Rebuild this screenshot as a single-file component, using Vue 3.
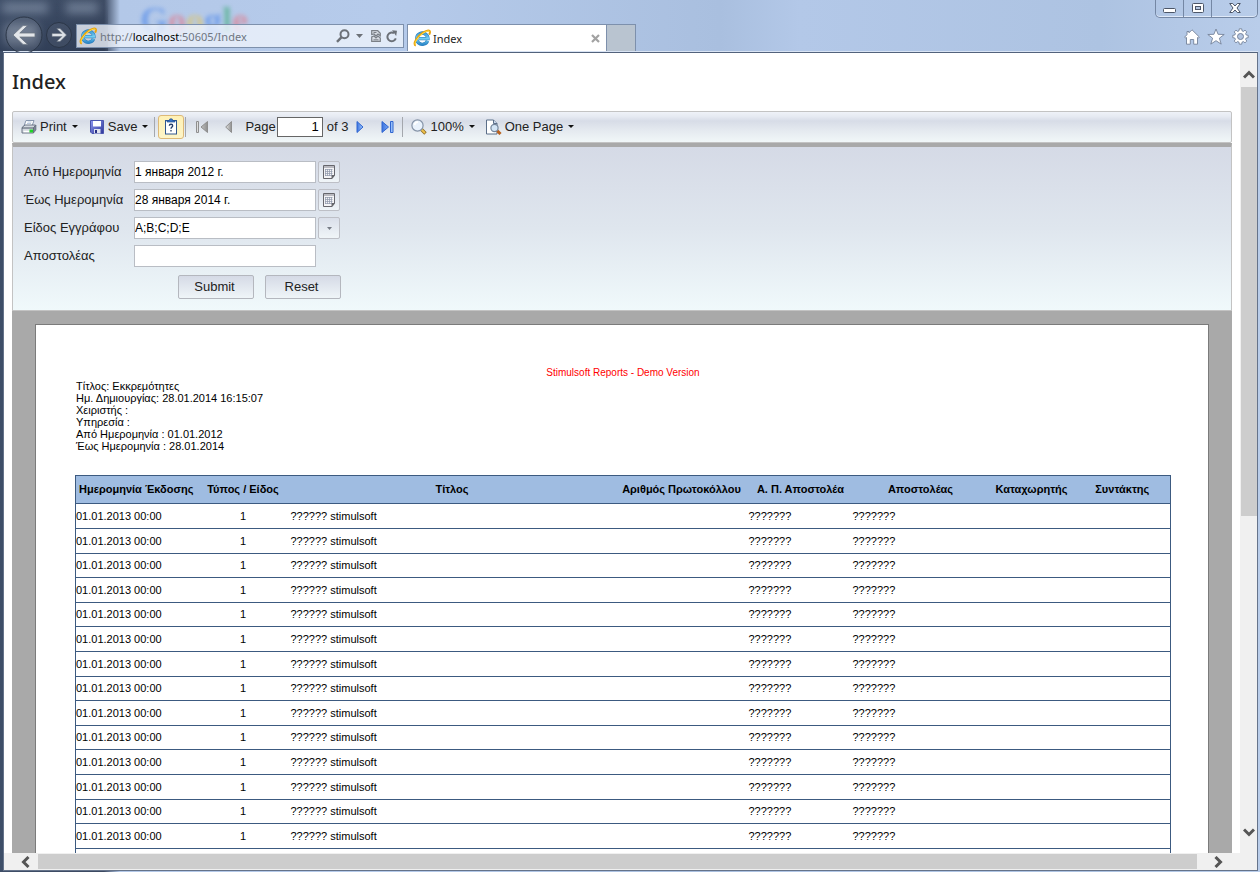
<script setup>
import { ref } from 'vue'

const from = ref('1 января 2012 г.')
const to = ref('28 января 2014 г.')
const kinds = ref('A;B;C;D;E')
const sender = ref('')
const page = ref('1')
const address = ref('http://localhost:50605/Index')

const info = [
  'Τίτλος: Εκκρεμότητες',
  'Ημ. Δημιουργίας: 28.01.2014 16:15:07',
  'Χειριστής :',
  'Υπηρεσία :',
  'Από Ημερομηνία : 01.01.2012',
  'Έως Ημερομηνία : 28.01.2014'
]
const columns = [
  'Ημερομηνία Έκδοσης',
  'Τύπος / Είδος',
  'Τίτλος',
  'Αριθμός Πρωτοκόλλου',
  'Α. Π. Αποστολέα',
  'Αποστολέας',
  'Καταχωρητής',
  'Συντάκτης'
]
const rows = Array.from({ length: 15 }, () => [
  '01.01.2013 00:00', '1', '?????? stimulsoft', '', '???????', '???????', '', ''
])
</script>

<template>
  <div class="window">
    <div class="glass" aria-hidden="true">
      <i class="smudge s1"></i><i class="smudge s2"></i><i class="smudge s3"></i>
      <span class="ghost"><b class="blue">G</b><b class="red">o</b><b class="gold">o</b><b class="blue">g</b><b class="green">l</b><b class="red">e</b></span>
    </div>

    <svg class="defs" width="0" height="0" aria-hidden="true">
      <defs>
        <linearGradient id="ieBlue" x1="0" y1="0" x2="0" y2="1">
          <stop offset="0" stop-color="#3f9bd6" /><stop offset=".5" stop-color="#74d0f3" /><stop offset="1" stop-color="#2f8bcb" />
        </linearGradient>
        <linearGradient id="arrowBlue" x1="0" y1="0" x2="1" y2="0">
          <stop offset="0" stop-color="#3a72e0" /><stop offset="1" stop-color="#a4cafc" />
        </linearGradient>
        <linearGradient id="arrowGrey" x1="0" y1="0" x2="1" y2="0">
          <stop offset="0" stop-color="#e6e6e6" /><stop offset="1" stop-color="#8e8e8e" />
        </linearGradient>
        <linearGradient id="floppy" x1="0" y1="0" x2="1" y2="1">
          <stop offset="0" stop-color="#8f98f2" /><stop offset="1" stop-color="#2c3698" />
        </linearGradient>
        <symbol id="ie" viewBox="0 0 18 18">
          <path d="M14.500 11.800A5.600 5.600 0 1 1 14.900 9.600H6" fill="none" stroke="#2a7dbc" stroke-width="3.400" />
          <path d="M14.500 11.800A5.600 5.600 0 1 1 14.900 9.600H6" fill="none" stroke="url(#ieBlue)" stroke-width="2.400" />
          <path d="M2.800 16.600C-.8 15 4.200 7.400 10 3.600 14 1 17.400.3 16.900 3.600c-.1.8-.4 1.500-.8 2" fill="none" stroke="#e9a30d" stroke-width="2" />
          <path d="M2.400 15.800C1 13.600 5 7.900 10 4.300c3-2.100 6-3 6.500-1.600" fill="none" stroke="#ffe04a" stroke-width="1" />
        </symbol>
      </defs>
    </svg>

    <header class="chrome">
      <nav class="history">
        <button class="back" aria-label="Back">
          <svg width="38" height="38" viewBox="0 0 38 38"><circle cx="19" cy="19" r="18" fill="#ffffff12" stroke="#2b3647" stroke-width="1" /><path d="M8 19 18 9.600h4.600L14.800 17H30v4H14.800l7.800 7.400H18z" fill="#e3e6ea" stroke="#6a7482" stroke-width=".8" /></svg>
        </button>
        <button class="forward" aria-label="Forward">
          <svg width="28" height="28" viewBox="0 0 28 28"><circle cx="14" cy="14" r="12.500" fill="#ffffff10" stroke="#2b3647" stroke-width="1" /><path d="M21.500 14 15 7.500h-3.200l5 5H7v3h9.800l-5 5H15z" fill="#dde1e7" stroke="#6a7482" stroke-width=".6" /></svg>
        </button>
      </nav>
      <div class="address">
        <svg width="18" height="18"><use href="#ie" /></svg>
        <div class="url" role="textbox" aria-label="Address" :title="address">http://<b>localhost</b>:50605/Index</div>
        <button aria-label="Search"><svg width="14" height="14" viewBox="0 0 14 14"><circle cx="8.500" cy="5.300" r="4" fill="none" stroke="#6c7178" stroke-width="2" /><path d="M5.600 8.200 1 12.800" stroke="#6c7178" stroke-width="2.400" /></svg></button>
        <button class="mini" aria-label="Search options"><svg width="7" height="4" viewBox="0 0 7 4"><path d="M0 0h7L3.500 4z" fill="#6c7178" /></svg></button>
        <button class="compat" aria-label="Compatibility view"><svg width="10" height="12" viewBox="0 0 10 12"><path d="M.7 4.500V.7h6l2.600 2.500v2.500L7 4 5 6 3 4zM.7 11.300V7L3 6l2 2 2-2 2.300 2v3.300z" fill="#d9dee6" stroke="#7b8087" stroke-width="1.200" /><path d="M2.500 2.500h3M2.500 9.800h5" stroke="#7b8087" /></svg></button>
        <button class="reload" aria-label="Refresh"><svg width="12" height="13" viewBox="0 0 12 13"><path d="M9.800 8.300A4.300 4.300 0 1 1 8 3.200" fill="none" stroke="#6c7178" stroke-width="2" /><path d="M6 .2 11 .8 10.200 6z" fill="#6c7178" /></svg></button>
      </div>
      <div class="tab">
        <svg width="18" height="18"><use href="#ie" /></svg>
        <span>Index</span>
        <button aria-label="Close tab"><svg width="9" height="9" viewBox="0 0 9 9"><path d="m1 1 7 7M8 1 1 8" stroke="#a2a2a2" stroke-width="2.200" /></svg></button>
      </div>
      <button class="newtab" aria-label="New tab"></button>
      <div class="right">
        <div class="controls">
          <button aria-label="Minimize"><svg width="13" height="6" viewBox="0 0 13 6"><rect x=".5" y=".5" width="12" height="4" rx="1" fill="#fff" stroke="#4c5668" /></svg></button>
          <button aria-label="Maximize"><svg width="12" height="10" viewBox="0 0 12 10"><rect x=".5" y=".5" width="11" height="9" rx="1" fill="#fff" stroke="#4c5668" /><rect x="3.500" y="3.500" width="5" height="3" fill="#b5c6e0" stroke="#4c5668" /></svg></button>
          <button class="close" aria-label="Close"><svg width="12" height="10" viewBox="0 0 12 10"><path d="M.7.5h3L6 3 8.300.5h3L8 5l3.300 4.500h-3L6 7 3.700 9.500h-3L4 5z" fill="#fff" stroke="#4c5668" /></svg></button>
        </div>
        <div class="tools">
          <button aria-label="Home"><svg width="16" height="16" viewBox="0 0 16 16"><path d="M8 .8 15.300 8l-1 1.200-.8-.7v6.700H9.700v-4.700H6.300v4.700H2.500V8.500l-.8.7-1-1.200L3 5.700V2.500h2v1.300z" fill="#fff" stroke="#74829a" stroke-width=".9" /></svg></button>
          <button aria-label="Favorites"><svg width="18" height="17" viewBox="0 0 18 17"><path d="m9 1 2.100 5.300 6.100.2-4.800 3.700 1.800 5.900L9 12.700l-5.200 3.400 1.800-5.900L.8 6.500l6.100-.2z" fill="#fff" stroke="#74829a" stroke-width=".9" /></svg></button>
          <button aria-label="Tools"><svg width="17" height="17" viewBox="0 0 17 17"><path d="M7.300.8h2.400l.3 2 1.400.6L13 2.200l1.800 1.700-1.200 1.700.6 1.400 2 .3v2.400l-2 .3-.6 1.400 1.200 1.700L13 14.800l-1.600-1.200-1.400.6-.3 2H7.300l-.3-2-1.400-.6L4 14.800l-1.800-1.700 1.200-1.700-.6-1.400-2-.3V7.300l2-.3.600-1.400-1.200-1.700L4 2.200l1.600 1.200L7 2.800z" fill="#fff" stroke="#74829a" stroke-width=".9" /><circle cx="8.500" cy="8.500" r="3" fill="#b3c5e1" stroke="#74829a" /></svg></button>
        </div>
      </div>
    </header>

    <div class="client">
      <main class="doc">
        <h1>Index</h1>
        <div class="viewer">
          <div class="toolbar" role="toolbar" aria-label="Report">
            <button class="tool print">
              <svg width="16" height="16" viewBox="0 0 16 16"><path d="M5 1.500h8L11 7H3z" fill="#fff" stroke="#8796ae" /><path d="M6.500 3h4M6 4.500h4" stroke="#9db1d0" stroke-width=".7" /><path d="M1 8.500 4 6h10.500l-2 3v5H1z" fill="#d4d9e0" stroke="#6d7787" /><path d="m12.500 9 2.500-3v5l-2.500 3z" fill="#7d8797" stroke="#5f6978" stroke-width=".6" /><path d="M1 9h11.500" stroke="#4d5766" /><path d="M2.500 12.500h6" stroke="#fff" stroke-width="1.500" /><rect x="8.500" y="10.500" width="3.500" height="3" fill="#20d428" /></svg>
              Print<i class="caret"></i>
            </button>
            <button class="tool save">
              <svg width="14" height="14" viewBox="0 0 14 14"><path d="M.5.500h13v13H2L.5 12z" fill="url(#floppy)" stroke="#4a54ae" /><path d="M3 1h8v5.500H3z" fill="#fff" /><path d="M4 9h6.500v4.500H4z" fill="#dfe2ee" /><path d="M5 10h2v3H5z" fill="#272f84" /></svg>
              Save<i class="caret"></i>
            </button>
            <i class="sep"></i>
            <button class="params" aria-label="Parameters">
              <svg width="14" height="17" viewBox="0 0 14 17"><rect x="1.500" y="2.500" width="11" height="13.500" fill="#fff" stroke="#31578e" /><path d="M3 4V2.500h2.200a1.800 1.800 0 0 1 3.600 0H11V4z" fill="#3975c6" stroke="#234e90" stroke-width=".7" /><path d="M5.300 7.700c.1-2 3.400-1.900 3.400 0C8.700 9 7 9 7 10.800M7 12v1.500" fill="none" stroke="#243d69" stroke-width="1.300" /></svg>
            </button>
            <i class="sep"></i>
            <button class="nav first" aria-label="First page"><svg width="13" height="12" viewBox="0 0 13 12"><path d="M.5.500h2v11h-2zM11.500.5v11L5 6z" fill="url(#arrowGrey)" stroke="#8e8e8e" /></svg></button>
            <button class="nav prev" aria-label="Previous page"><svg width="8" height="12" viewBox="0 0 8 12"><path d="M6.500.5v11L.7 6z" fill="url(#arrowGrey)" stroke="#8e8e8e" /></svg></button>
            <label for="page">Page</label>
            <input id="page" v-model="page">
            <span>of 3</span>
            <button class="nav next" aria-label="Next page"><svg width="8" height="12" viewBox="0 0 8 12"><path d="M1 .5v11L7 6z" fill="url(#arrowBlue)" stroke="#2f65d0" /></svg></button>
            <button class="nav last" aria-label="Last page"><svg width="13" height="12" viewBox="0 0 13 12"><path d="M1 .5v11L7.500 6zM9.500.5h2.500v11H9.500z" fill="url(#arrowBlue)" stroke="#2f65d0" /></svg></button>
            <i class="sep"></i>
            <button class="tool zoom">
              <svg width="16" height="16" viewBox="0 0 16 16"><path d="m10 10 4.500 4.500" stroke="#8d6b25" stroke-width="3.400" /><path d="m10.500 10.500 3.500 3.500" stroke="#efc24a" stroke-width="1.800" /><circle cx="6.500" cy="6.500" r="5.600" fill="#e9f2fc" stroke="#8694a8" stroke-width="1.200" /><path d="M3.500 6A3.500 3.500 0 0 1 7 3.200" fill="none" stroke="#fff" stroke-width="1.800" /></svg>
              100%<i class="caret"></i>
            </button>
            <button class="tool">
              <svg width="16" height="16" viewBox="0 0 16 16"><path d="M.5 1h7L11 4.500V15H.5z" fill="#fff" stroke="#5b6e88" /><path d="M7.500 1v3.500H11" fill="#c9d9ee" stroke="#5b6e88" /><path d="m10.500 11 4 4" stroke="#b9601c" stroke-width="3" /><circle cx="8.500" cy="9" r="3.600" fill="#d4e5f6" stroke="#75869c" stroke-width="1.200" /></svg>
              One Page<i class="caret"></i>
            </button>
          </div>

          <form class="filters" @submit.prevent>
            <div class="field">
              <label for="from">Από Ημερομηνία</label><input id="from" v-model="from">
              <button type="button" aria-label="Choose start date"><svg width="12" height="14" viewBox="0 0 12 14"><path d="M.500.500h11v10L9 13.500H.5z" fill="#f4f4f6" stroke="#66666c" /><path d="M1 2h10" stroke="#b9b9c0" stroke-width="2" /><path d="M2 4.500h7.500M2 6.500h7.500M2 8.500h7.500M2 10.500h7.500M2.500 4v7M4.500 4v7M6.500 4v7M8.500 4v7" stroke="#8e97ab" stroke-width=".7" /><path d="M9 13.500v-3h2.500" fill="#666" stroke="#66666c" /></svg></button>
            </div>
            <div class="field">
              <label for="to">Έως Ημερομηνία</label><input id="to" v-model="to">
              <button type="button" aria-label="Choose end date"><svg width="12" height="14" viewBox="0 0 12 14"><path d="M.500.500h11v10L9 13.500H.5z" fill="#f4f4f6" stroke="#66666c" /><path d="M1 2h10" stroke="#b9b9c0" stroke-width="2" /><path d="M2 4.500h7.500M2 6.500h7.500M2 8.500h7.500M2 10.500h7.500M2.500 4v7M4.500 4v7M6.500 4v7M8.500 4v7" stroke="#8e97ab" stroke-width=".7" /><path d="M9 13.500v-3h2.500" fill="#666" stroke="#66666c" /></svg></button>
            </div>
            <div class="field">
              <label for="kinds">Είδος Εγγράφου</label><input id="kinds" v-model="kinds">
              <button type="button" aria-label="Choose kinds"><svg width="5" height="3" viewBox="0 0 5 3"><path d="M0 0h5L2.500 3z" fill="#777c86" /></svg></button>
            </div>
            <div class="field">
              <label for="sender">Αποστολέας</label><input id="sender" v-model="sender">
            </div>
            <div class="actions"><button type="submit">Submit</button><button type="reset">Reset</button></div>
          </form>

          <div class="desk">
            <article class="sheet">
              <p class="demo">Stimulsoft Reports - Demo Version</p>
              <div class="info"><p v-for="line in info" :key="line">{{ line }}</p></div>
              <table>
                <colgroup><col class="c1"><col class="c2"><col><col class="c4"><col class="c5"><col class="c6"><col class="c7"><col class="c8"></colgroup>
                <thead><tr><th v-for="c in columns" :key="c" scope="col">{{ c }}</th></tr></thead>
                <tbody>
                  <tr v-for="(row, r) in rows" :key="r"><td v-for="(cell, i) in row" :key="i">{{ cell }}</td></tr>
                </tbody>
              </table>
            </article>
          </div>
        </div>
      </main>
      <div class="vbar">
        <button aria-label="Scroll up"><svg width="12" height="9" viewBox="0 0 12 9"><path d="m1 7.500 5-5 5 5" fill="none" stroke="#555" stroke-width="3" /></svg></button>
        <div class="track"><i class="thumb"></i></div>
        <button aria-label="Scroll down"><svg width="12" height="9" viewBox="0 0 12 9"><path d="m1 1.500 5 5 5-5" fill="none" stroke="#555" stroke-width="3" /></svg></button>
      </div>
      <div class="hbar">
        <button aria-label="Scroll left"><svg width="9" height="12" viewBox="0 0 9 12"><path d="m7.500 1-5 5 5 5" fill="none" stroke="#555" stroke-width="3" /></svg></button>
        <i class="thumb"></i>
        <button aria-label="Scroll right"><svg width="9" height="12" viewBox="0 0 9 12"><path d="m1.500 1 5 5-5 5" fill="none" stroke="#555" stroke-width="3" /></svg></button>
      </div>
    </div>
  </div>
</template>

<style>
html, body { background: #b5c9e8; overflow: hidden; }
</style>

<style scoped>
* { box-sizing: border-box; }
button { border: 0; padding: 0; margin: 0; background: none; font: inherit; color: inherit; display: flex; align-items: center; justify-content: center; }
svg { display: block; flex: none; }
p, h1 { margin: 0; }
input { font: inherit; border-radius: 0; outline: 0; min-width: 0; }

.window {
  position: relative;
  display: flex;
  flex-direction: column;
  height: 100vh;
  padding: 0 2px 1px 3px;
  overflow: hidden;
  font-family: "Liberation Sans", Arial, sans-serif;
  background: linear-gradient(90deg, #3e4e68 0, #3c4a62 104px, #b3c8e8 120px, #b6cbeb 380px, #a9bfdf 720px, #b3c8e8 800px, #adc3e2 1100px, #b9cdea 100%);
}
.defs { position: absolute; }
.glass { position: absolute; inset: 0 0 auto; height: 51px; overflow: hidden; }
.glass::after { content: ""; position: absolute; left: 0; top: 0; width: 108px; height: 51px; background: linear-gradient(180deg, transparent, #29364e 100%); opacity: .6; }
.smudge { position: absolute; filter: blur(5px); background: #76859c; }
.s1 { left: 2px; top: 3px; width: 46px; height: 11px; }
.s2 { left: 66px; top: 3px; width: 32px; height: 11px; }
.s3 { left: 4px; top: 24px; width: 34px; height: 22px; background: #8d9aae; }
.ghost { position: absolute; left: 140px; top: 2px; font-family: "Liberation Serif", serif; font-size: 36px; line-height: 36px; filter: blur(2px); opacity: .7; }
.ghost b { font-weight: 700; }
.blue { color: #5b90ea; }
.red { color: #e07f90; }
.gold { color: #dfc66e; }
.green { color: #4fb08a; }

.chrome { position: relative; display: flex; align-items: flex-end; height: 52px; flex: none; border-bottom: 1px solid #d9e4f4; font-family: "Noto Sans", sans-serif; font-size: 11px; }
.history { display: flex; align-items: center; width: 73px; height: 32px; gap: 2px; padding-left: 2px; }
.address { display: flex; align-items: center; width: 328px; height: 24px; margin-bottom: 3px; padding: 0 5px 0 2px; border: 1px solid #7d90ac; background: #edf3fbcc; }
.url { flex: 1; margin-left: 3px; color: #6f7681; white-space: nowrap; }
.url b { font-weight: 400; color: #000; }
.mini { margin-left: 6px; }
.compat { margin-left: 8px; }
.reload { margin-left: 5px; }
.tab { display: flex; align-items: center; width: 200px; height: 27px; margin-left: 3px; padding: 0 6px 0 5px; background: #fff; border: 1px solid #7d90ac; border-bottom: 0; }
.tab span { flex: 1; margin-left: 2px; color: #222; }
.newtab { width: 29px; height: 27px; background: #b9c4d0; border: 1px solid #7d90ac; border-width: 1px 1px 0 0; }
.right { flex: 1; display: flex; flex-direction: column; align-items: flex-end; justify-content: space-between; height: 51px; }
.controls { display: flex; height: 18px; border: 1px solid #7487a4; border-top: 0; border-radius: 0 0 5px 5px; box-shadow: inset 0 -1px #dfe9f8; }
.controls button { width: 28px; padding-bottom: 1px; border-right: 1px solid #7487a4; }
.controls button:first-child svg { margin-top: 5px; }
.controls .close { width: 45px; border: 0; }
.tools { display: flex; align-items: center; gap: 7px; padding: 0 9px 6px 0; }

.client {
  position: relative;
  flex: 1;
  min-height: 0;
  display: grid;
  grid-template: minmax(0, 1fr) 17px / minmax(0, 1fr) 17px;
  background: #fff;
  border: 1px solid #65738a;
  border-top-color: #52627c;
}
.doc { overflow: hidden; padding: 0 8px; display: flex; flex-direction: column; }
h1 { font: 500 20px/58px "Noto Sans", sans-serif; color: #222; flex: none; }
.viewer { flex: 1; min-height: 0; display: flex; flex-direction: column; font-size: 13px; color: #222; }
.toolbar { display: flex; align-items: center; flex: none; height: 32px; padding: 0 8px 1px; border: 1px solid #c3c3c3; border-radius: 2px; background: linear-gradient(#eff2f8 0, #e6eaf2 15%, #d7dce7 30%, #e4e9ef 60%, #f1f7f8 100%); white-space: nowrap; }
.tool svg { margin-right: 3px; }
.tool { margin-right: 12px; }
.save svg { margin-right: 4px; }
.save { margin-right: 6px; }
.zoom { margin-right: 11px; }
.caret { margin-left: 5px; border: 3px solid transparent; border-top-color: #111; border-bottom: 0; }
.sep { width: 1px; height: 20px; background: #a4a7ad; }
.params { width: 26px; height: 24px; margin: 0 1px 0 3px; border: 1px solid #ddb978; border-radius: 3px; background: linear-gradient(#fff1b5, #fdf5c8); }
.first { margin: 0 16px 0 10px; }
.prev { margin-right: 12px; }
.toolbar label { margin-right: 1px; }
.toolbar input { width: 46px; height: 20px; padding: 0 3px; text-align: right; border: 1px solid #666; background: #fff; margin-right: 4px; }
.next { margin: 0 17px 0 8px; }
.last { margin-right: 8px; }
.last + .sep { margin-right: 8px; }

.filters { flex: none; height: 168px; padding: 14px 11px 0; border: 1px solid #c3c3c3; border-top: 4px solid #a9a9a9; background: linear-gradient(#d5dae6, #dfe6ee 50%, #f0f9fb); }
.field { display: flex; align-items: center; height: 22px; margin-bottom: 6px; }
.field label { width: 110px; padding-bottom: 2px; }
.field input { width: 182px; height: 22px; padding: 0 0 1px; border: 1px solid #b9bdc4; background: #fff; font-size: 12px; color: #000; }
.field button { width: 22px; height: 22px; margin-left: 2px; border: 1px solid #bdbfc6; border-radius: 2px; background: linear-gradient(#dadfea, #f0f5f8); }
.actions { display: flex; gap: 11px; margin: 8px 0 0 154px; }
.actions button { width: 76px; height: 24px; padding: 0 3px 2px 0; border: 1px solid #b4b7be; border-radius: 2px; background: linear-gradient(#d5dae6, #eff5f8); }

.desk { flex: 1; min-height: 0; overflow: hidden; padding: 13px 23px 0; background: #a9a9a9; }
.sheet { padding: 42px 37px 20px 39px; border: 1px solid #7b7b7b; background: #fff; color: #000; font-size: 11px; }
.demo { font-size: 10px; line-height: 11px; color: #f00; text-align: center; }
.info { padding: 2px 0 23px 1px; line-height: 12px; }
.info p { white-space: nowrap; }
table { width: 100%; table-layout: fixed; border-collapse: collapse; border: 1px solid #3c5a80; }
.c1 { width: 121px; }
.c2 { width: 93px; }
.c4 { width: 134px; }
.c5 { width: 104px; }
.c6 { width: 136px; }
.c7 { width: 86px; }
.c8 { width: 96px; }
tr { height: 25px; border-bottom: 1px solid #3c5a80; }
thead tr { height: 28px; background: #9fbce1; }
tbody tr:nth-child(5n + 3), tbody tr:nth-child(5n) { height: 24px; }
th, td { padding: 0; line-height: 13px; white-space: nowrap; text-align: left; }
th { text-align: center; }
td:nth-child(3) { padding-left: 1px; }
td:nth-child(2) { text-align: center; }

.vbar { display: flex; flex-direction: column; background: #f0f0f0; }
.vbar button { height: 34px; padding-top: 8px; }
.vbar button:last-child { padding: 0 0 8px; }
.track { flex: 1; display: flex; flex-direction: column; padding-left: 1px; }
.track::after { content: ""; flex: 303; }
.thumb { display: block; background: #cdcdcd; }
.track .thumb { flex: 428; }
.hbar { grid-column: 1 / 3; display: flex; background: #f0f0f0; }
.hbar button { width: 34px; padding-left: 8px; }
.hbar button:last-child { width: 60px; padding: 0 18px 0 0; }
.hbar .thumb { flex: 1; margin: 1px 0; }
</style>
